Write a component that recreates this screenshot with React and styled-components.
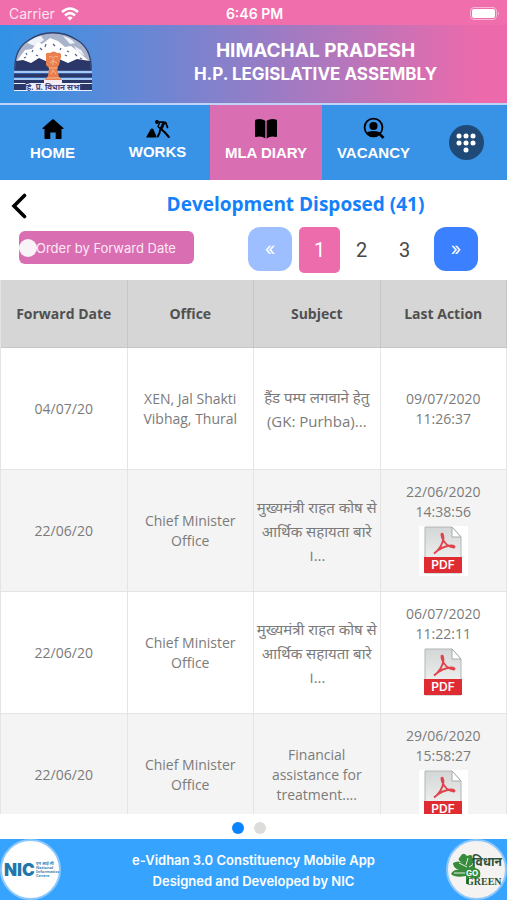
import React, { useState } from 'react'
import styled, { createGlobalStyle } from 'styled-components'

const GlobalStyle = createGlobalStyle`
    * {
        box-sizing: border-box;
    }
    body {
        margin: 0;
        background-color: white;
        font-family: 'Inter', sans-serif;
    }
    button {
        border: none;
        padding: 0;
        margin: 0;
        font-family: inherit;
        cursor: pointer;
    }
    svg {
        display: block;
        flex-shrink: 0;
    }
`

const Screen = styled.div`
    display: flex;
    flex-direction: column;
    height: 100vh;
    overflow: hidden;
`

const StatusBar = styled.div`
    display: grid;
    grid-template-columns: 1fr auto 1fr;
    align-items: center;
    height: 25px;
    padding: 2px 7px 0 9px;
    background-color: #f06eac;
    color: white;
    font-size: 14px;
    flex-shrink: 0;
`

const Carrier = styled.div`
    display: flex;
    align-items: center;
    gap: 6px;
    color: #fde3ef;
`

const Clock = styled.div`
    font-weight: 600;
`

const Battery = styled.div`
    display: flex;
    justify-content: flex-end;
`

const Header = styled.header`
    display: flex;
    align-items: center;
    height: 80px;
    padding: 0 0 4px 14px;
    background: linear-gradient(to right, #3093e6 0%, #ec6aab 95%);
    border-bottom: 2px solid #bfd3f7;
    flex-shrink: 0;
`

const HeaderText = styled.div`
    flex: 1;
    padding: 0 0 0 32px;
    text-align: center;
    color: white;
`

const Title = styled.h1`
    margin: 0;
    font-weight: 700;
    font-size: 19px;
    line-height: 24px;
`

const SubTitle = styled.h2`
    margin: 0;
    font-weight: 700;
    font-size: 17px;
    line-height: 22px;
`

const Nav = styled.nav`
    display: flex;
    height: 75px;
    background-color: #3892e6;
    flex-shrink: 0;
`

const NavItem = styled.a`
    display: flex;
    flex-direction: column;
    align-items: center;
    flex: ${props => props.$grow} 1 0;
    gap: 3px;
    padding-top: 12px;
    background-color: ${props => props.$active ? '#da6eb3' : 'transparent'};
    color: white;
    font-family: 'Liberation Sans', sans-serif;
    font-weight: 700;
    font-size: 15px;
    line-height: 20px;
    text-decoration: none;
`

const MenuCell = styled.div`
    display: flex;
    align-items: center;
    justify-content: center;
    flex: 82 1 0;
`

const MenuButton = styled.button`
    display: flex;
    align-items: center;
    justify-content: center;
    width: 35px;
    height: 35px;
    border-radius: 50%;
    background-color: #1f4a77;
`

const TitleRow = styled.div`
    display: flex;
    align-items: center;
    height: 47px;
    padding: 4px 0 0 11px;
    flex-shrink: 0;
`

const BackButton = styled.button`
    background: none;
`

const PageTitle = styled.h3`
    flex: 1;
    margin: 0;
    padding: 0 0 4px 57px;
    text-align: center;
    font-family: 'Open Sans', sans-serif;
    font-weight: 700;
    font-size: 19px;
    line-height: 26px;
    color: #1480fa;
`

const Controls = styled.div`
    display: flex;
    justify-content: space-between;
    height: 53px;
    padding: 0 29px 0 19px;
    flex-shrink: 0;
`

const OrderSwitch = styled.label`
    display: flex;
    align-items: center;
    height: 33px;
    width: 175px;
    margin-top: 4px;
    border-radius: 6px;
    background-color: #da6eb3;
    color: #fdeaf5;
    font-size: 13px;
    white-space: nowrap;
`

const OrderCheck = styled.input`
    appearance: none;
    flex-shrink: 0;
    width: 18px;
    height: 18px;
    margin: 0 -1px 0 0;
    border-radius: 50%;
    background-color: #f7f3f6;
    z-index: 1;
`

const Pages = styled.div`
    display: flex;
    align-items: flex-start;
`

const StepButton = styled.button`
    width: 44px;
    height: 44px;
    border-radius: 12px;
    background-color: #3a80ff;
    color: white;
    font-size: 18px;
    line-height: 44px;

    &:disabled {
        background-color: #9dbfff;
    }
`

const PageButton = styled.button`
    width: ${props => props.$active ? '41px' : '43px'};
    height: 46px;
    margin-left: ${props => props.$active ? '7px' : '0'};
    border-radius: 5px;
    background-color: ${props => props.$active ? '#ec6cac' : 'transparent'};
    color: ${props => props.$active ? 'white' : '#484848'};
    font-family: 'Roboto', sans-serif;
    font-size: 20px;
`

const Spacer = styled.div`
    width: 8px;
`

const TableArea = styled.main`
    flex: 1;
    min-height: 0;
    overflow: hidden;
`

const Table = styled.table`
    width: 100%;
    table-layout: fixed;
    border-collapse: separate;
    border-spacing: 0;
    border-left: 1px solid #e4e4e4;
    font-family: 'Open Sans', 'Noto Sans', 'Noto Sans Devanagari', sans-serif;
    font-size: 14px;
`

const HeadCell = styled.th`
    height: 68px;
    padding: 0 2px;
    background-color: #d6d6d6;
    border-right: 1px solid #c6c6c6;
    border-bottom: 1px solid #c6c6c6;
    color: #505050;
    font-weight: 700;
`

const Row = styled.tr`
    background-color: ${props => props.$shaded ? '#f4f4f4' : 'white'};
`

const Cell = styled.td`
    height: 122px;
    padding: 0 ${props => props.$wide ? '1px' : '8px'};
    border-right: 1px solid #e4e4e4;
    border-bottom: 1px solid #e4e4e4;
    text-align: center;
    vertical-align: middle;
    font-size: ${props => props.$tall ? '15px' : '14px'};
    line-height: ${props => props.$tall ? '24px' : '20px'};
    color: #7b7b7b;
    white-space: pre-line;
`

const PdfLink = styled.a`
    display: flex;
    justify-content: center;
    margin: 4px auto;
    width: 49px;
    background-color: white;
`

const Dots = styled.div`
    display: flex;
    align-items: center;
    justify-content: center;
    gap: 10px;
    height: 25px;
    padding-top: 2px;
    padding-right: 9px;
    flex-shrink: 0;
`

const Dot = styled.button`
    width: 12px;
    height: 12px;
    border-radius: 50%;
    background-color: ${props => props.$active ? '#0a84ff' : '#dcdcda'};
`

const Footer = styled.footer`
    display: flex;
    align-items: center;
    justify-content: space-between;
    height: 61px;
    background-color: #36a4ff;
    flex-shrink: 0;
`

const FooterText = styled.p`
    margin: 0;
    padding-top: 3px;
    text-align: center;
    color: white;
    font-weight: 600;
    font-size: 13px;
    line-height: 21px;
`

const menu = [
    { label: 'HOME', icon: HomeIcon, grow: 105 },
    { label: 'WORKS', icon: WorksIcon, grow: 105 },
    { label: 'MLA DIARY', icon: BookIcon, grow: 112, active: true },
    { label: 'VACANCY', icon: VacancyIcon, grow: 103 },
]

const items = [
    { date: '04/07/20', office: 'XEN, Jal Shakti Vibhag, Thural', subject: 'हैंड पम्प लगवाने हेतु\n(GK: Purhba)...', hindi: true, action: '09/07/2020\n11:26:37' },
    { date: '22/06/20', office: 'Chief Minister Office', subject: 'मुख्यमंत्री राहत कोष से\nआर्थिक सहायता बारे\n।...', hindi: true, action: '22/06/2020\n14:38:56', pdf: true },
    { date: '22/06/20', office: 'Chief Minister Office', subject: 'मुख्यमंत्री राहत कोष से\nआर्थिक सहायता बारे\n।...', hindi: true, action: '06/07/2020\n11:22:11', pdf: true },
    { date: '22/06/20', office: 'Chief Minister Office', subject: 'Financial\nassistance for\ntreatment....', action: '29/06/2020\n15:58:27', pdf: true },
]

function WifiIcon() {
    return (
        <svg width="18" height="14" viewBox="0 0 18 14" fill="none" stroke="white" strokeWidth="2.6">
            <path d="M1 5Q9-2 17 5" />
            <path d="M4 8.4Q9 4 14 8.4" />
            <path d="M6.2 10.5Q9 8.4 11.8 10.5L9 13.5Z" fill="white" stroke="none" />
        </svg>
    )
}

function BatteryIcon() {
    return (
        <svg width="30" height="13" viewBox="0 0 30 13">
            <rect x="0.5" y="0.5" width="26" height="12" rx="3.5" fill="none" stroke="#f8b5d5" />
            <rect x="2" y="2" width="23" height="9" rx="2" fill="white" />
            <path d="M28 4.5Q30 6.5 28 8.5Z" fill="#f8b5d5" />
        </svg>
    )
}

function Emblem() {
    return (
        <svg width="78" height="60" viewBox="0 0 78 60">
            <path d="M1 38Q0 17 15 8Q26 0.800 39 0.800T63 8Q78 17 77 38Z" fill="#a9b3c9" stroke="#34406f" strokeWidth="1.4" />
            <path d="M13 11Q20 5 27 4L30 8L21 14ZM49 4Q57 6 61 11L56 12ZM60 14L67 18L71 24L63 19Z" fill="#eef2fa" />
            <path d="M2 30L11 18L18 17L24 10L28 12L36 6L44 9L51 15L57 14L67 22L76 30V36H2Z" fill="white" />
            <path d="M1 38L2 29L9 28L17 31L25 26L34 30L45 27L54 31L63 27L76 29L77 38Z" fill="#2b3768" />
            <path d="M12 21L13 23M19 18L18 20M26 16L28 18M32 12L31 15M39 12L41 14M47 16L46 18M53 19L55 20M61 22L63 24M22 23L24 24M51 23L53 24M10 26L12 25M66 26L68 27" stroke="#53608d" strokeWidth="1.2" />
            <path d="M0 40H78M0 47H78" stroke="#a4c8f1" strokeWidth="2" />
            <path d="M0 43.5H78" stroke="#2b3768" strokeWidth="4" />
            <path d="M0 49.5H78" stroke="#2b3768" strokeWidth="3" />
            <rect x="0" y="51" width="78" height="8" fill="#e9eefb" />
            <path d="M0 52H12V58H0ZM66 52H78V58H66Z" fill="#2b3768" />
            <path d="M32 24Q31 20 36 21Q40 18 43 21Q48 20 47 25L45 33L43 36L45 45L48 48H31L34 44L35 36L32 33Z" fill="#ea8050" />
            <path d="M35 25Q37 23 39 26Q41 23 44 25M36 31L39 29L43 31M35 36H44M37 42L39 38L42 42M33 46H46M39 27V33" fill="none" stroke="#f5b98a" />
            <rect x="30" y="48" width="18" height="4" fill="#f7eaf0" />
            <text x="39" y="58" textAnchor="middle" fontFamily="Noto Sans, sans-serif" fontWeight="700" fontSize="8" fill="#4a4277">हि. प्र. विधान सभा</text>
        </svg>
    )
}

function HomeIcon() {
    return (
        <svg width="22" height="23" viewBox="0 0 22 23">
            <path d="M10.2 2.6Q11 1.9 11.8 2.6L21.4 11Q22 12 21 12H19.5V21Q19.5 22 18.5 22H13.7V15.5H8.3V22H3.5Q2.5 22 2.5 21V12H1Q0 12 .6 11Z" />
        </svg>
    )
}

function WorksIcon() {
    return (
        <svg width="24" height="22" viewBox="0 0 24 22">
            <path d="M0.500 20.500Q0 20.500 .5 19.500L4.500 12.500Q6 10.500 7.500 12.500L10.500 19.500Q10.700 20.500 10 20.500Z" />
            <circle cx="11" cy="5" r="2" />
            <g fill="none" stroke="black" strokeLinecap="round" strokeLinejoin="round">
                <path d="M13.500 5.200H18Q20 5.200 20.500 7.500L21.500 10.500" strokeWidth="1.700" />
                <path d="M17.500 6.500L15 12" strokeWidth="3" />
                <path d="M15.500 12.500L19 15.500L22.800 20" strokeWidth="2" />
                <path d="M14 13.500L13.500 16L11.800 19.500" strokeWidth="1.900" />
                <path d="M13.500 6L12 9.500L14 11.500" strokeWidth="1.400" />
            </g>
        </svg>
    )
}

function BookIcon() {
    return (
        <svg width="24" height="23" viewBox="0 0 24 23">
            <path d="M1 4Q1 3 2 2.600Q7 1 11.300 3.800V21.500Q7.500 18.500 2 20Q1 20.200 1 19Z" />
            <path d="M23 4Q23 3 22 2.600Q17 1 12.700 3.800V21.500Q16.500 18.500 22 20Q23 20.200 23 19Z" />
        </svg>
    )
}

function VacancyIcon() {
    return (
        <svg width="22" height="23" viewBox="0 0 22 23">
            <circle cx="10.500" cy="10.500" r="8.900" fill="none" stroke="black" strokeWidth="1.800" />
            <circle cx="10.500" cy="9" r="4.100" />
            <path d="M3.500 15.500Q6 14 10.500 14T17.500 15.500Q14.500 19.500 10.500 19.500T3.500 15.500Z" />
            <path d="M16 16.300L20.500 21" stroke="black" strokeWidth="2.600" />
        </svg>
    )
}

function KeypadIcon() {
    const dots = [[3, 3], [10, 3], [17, 3], [3, 10], [10, 10], [17, 10], [10, 17]]
    return (
        <svg width="20" height="20" viewBox="0 0 20 20" fill="white">
            {dots.map(([x, y]) => <circle key={x + '-' + y} cx={x} cy={y} r="2.5" />)}
        </svg>
    )
}

function BackIcon() {
    return (
        <svg width="16" height="26" viewBox="0 0 16 26">
            <path d="M13.500 2.500L3 13L13.500 23.500" fill="none" stroke="black" strokeWidth="3.600" strokeLinecap="round" />
        </svg>
    )
}

function PdfIcon() {
    return (
        <svg width="40" height="50" viewBox="0 0 40 50">
            <defs>
                <linearGradient id="paper" x1="0" y1="0" x2="0" y2="1">
                    <stop offset="0" stopColor="#d4d7d7" />
                    <stop offset="1" stopColor="#f8f8f8" />
                </linearGradient>
            </defs>
            <path d="M2 1H29L38 11V47H2Z" fill="url(#paper)" stroke="#b3b5b5" />
            <path d="M29 1V11H38Z" fill="white" stroke="#a9abab" />
            <path d="M11 27.500Q19 22 20.500 12Q20 6.500 18.500 8Q18 11 21.500 16Q25 21 31 21.500Q33 20 28 19.500Q19 20 11 27.500Z" fill="none" stroke="#e0434b" strokeWidth="1.800" />
            <rect x="1" y="31" width="38" height="16" fill="#df2b32" />
            <text x="20" y="43" textAnchor="middle" fontFamily="Inter, sans-serif" fontWeight="600" fontSize="12" fill="white">PDF</text>
        </svg>
    )
}

function NicLogo() {
    return (
        <svg width="61" height="61" viewBox="0 0 61 61">
            <circle cx="30.500" cy="30.500" r="29.500" fill="white" stroke="#8cc8fb" strokeWidth="2" />
            <text x="4" y="37" fontFamily="Inter, sans-serif" fontWeight="900" fontSize="17" fill="#2376ac">NIC</text>
            <g fontFamily="Noto Sans, sans-serif" fontWeight="700" fontSize="4" fill="#3884b4">
                <text x="36" y="26">एन आई सी</text>
                <text x="36" y="30">National</text>
                <text x="36" y="34">Informatics</text>
                <text x="36" y="38">Centre</text>
            </g>
        </svg>
    )
}

function GreenLogo() {
    return (
        <svg width="61" height="61" viewBox="0 0 61 61">
            <circle cx="30.500" cy="30.500" r="29.500" fill="#f5f2f2" stroke="#8cc8fb" strokeWidth="2" />
            <path d="M14 18Q17 12 21 17Q27 14 26 19Q30 21 26 25Q30 27 29 29Q36 30 34 38Q28 41 23 38V45H20V37Q9 39 5 35Q8 30 13 31Q7 29 7 24Q12 21 17 24Q10 21 14 18Z" fill="#378b3a" />
            <path d="M13 24L21 28M8 34L19 34M22 19L20 26M28 25L23 28" stroke="#e6f1e5" strokeWidth="1" />
            <text x="26" y="27" fontFamily="Noto Sans, sans-serif" fontWeight="700" fontSize="12" fill="#2d5238">विधान</text>
            <text x="20" y="37" fontFamily="Inter, sans-serif" fontWeight="700" fontSize="8" fill="white">GO</text>
            <text x="20" y="46" fontFamily="Liberation Serif, serif" fontWeight="700" fontSize="10" fill="#285536">GREEN</text>
        </svg>
    )
}

export default function App() {
    const [page, setPage] = useState(1)
    const [ordered, setOrdered] = useState(false)

    return (
        <Screen>
            <GlobalStyle />
            <StatusBar>
                <Carrier>Carrier <WifiIcon /></Carrier>
                <Clock>6:46 PM</Clock>
                <Battery><BatteryIcon /></Battery>
            </StatusBar>
            <Header>
                <Emblem />
                <HeaderText>
                    <Title>HIMACHAL PRADESH</Title>
                    <SubTitle>H.P. LEGISLATIVE ASSEMBLY</SubTitle>
                </HeaderText>
            </Header>
            <Nav>
                {menu.map(({ label, icon: Icon, grow, active }) => (
                    <NavItem key={label} href="#" $grow={grow} $active={active}>
                        <Icon />
                        {label}
                    </NavItem>
                ))}
                <MenuCell>
                    <MenuButton aria-label="Menu"><KeypadIcon /></MenuButton>
                </MenuCell>
            </Nav>
            <TitleRow>
                <BackButton aria-label="Back"><BackIcon /></BackButton>
                <PageTitle>Development Disposed (41)</PageTitle>
            </TitleRow>
            <Controls>
                <OrderSwitch>
                    <OrderCheck type="checkbox" checked={ordered} onChange={() => setOrdered(!ordered)} />
                    Order by Forward Date
                </OrderSwitch>
                <Pages>
                    <StepButton disabled={page === 1} onClick={() => setPage(page - 1)}>«</StepButton>
                    {[1, 2, 3].map(n => (
                        <PageButton key={n} $active={n === page} onClick={() => setPage(n)}>{n}</PageButton>
                    ))}
                    <Spacer />
                    <StepButton disabled={page === 3} onClick={() => setPage(page + 1)}>»</StepButton>
                </Pages>
            </Controls>
            <TableArea>
                <Table>
                    <thead>
                        <tr>
                            <HeadCell>Forward Date</HeadCell>
                            <HeadCell>Office</HeadCell>
                            <HeadCell>Subject</HeadCell>
                            <HeadCell>Last Action</HeadCell>
                        </tr>
                    </thead>
                    <tbody>
                        {items.map((item, i) => (
                            <Row key={i} $shaded={i % 2 === 1}>
                                <Cell>{item.date}</Cell>
                                <Cell>{item.office}</Cell>
                                <Cell $wide $tall={item.hindi}>{item.subject}</Cell>
                                <Cell>
                                    {item.action}
                                    {item.pdf && <PdfLink href="#" aria-label="Open PDF"><PdfIcon /></PdfLink>}
                                </Cell>
                            </Row>
                        ))}
                    </tbody>
                </Table>
            </TableArea>
            <Dots>
                <Dot $active aria-label="Slide 1" />
                <Dot aria-label="Slide 2" />
            </Dots>
            <Footer>
                <NicLogo />
                <FooterText>
                    e-Vidhan 3.0 Constituency Mobile App<br />
                    Designed and Developed by NIC
                </FooterText>
                <GreenLogo />
            </Footer>
        </Screen>
    )
}
